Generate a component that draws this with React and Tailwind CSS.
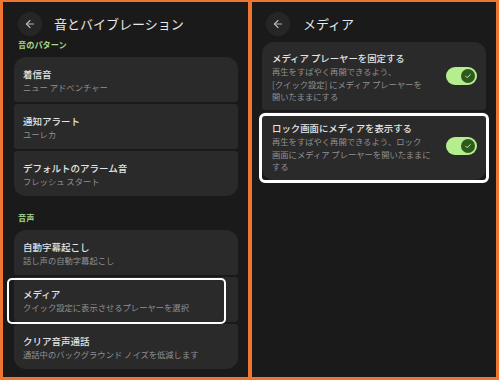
import React from "react";

const font = { fontFamily: '"Noto Sans CJK JP", "Noto Sans", sans-serif' };

function BackButton() {
  return (
    <div className="w-[24px] h-[24px] rounded-full bg-[#262626] flex items-center justify-center shrink-0">
      <svg width="12" height="12" viewBox="0 0 24 24" fill="none" stroke="#b4b4b4" strokeWidth="2.4" strokeLinecap="round" strokeLinejoin="round">
        <path d="M19 12H5" />
        <path d="M12 19l-7-7 7-7" />
      </svg>
    </div>
  );
}

function Item({ title, sub, pos, highlight }) {
  const radius =
    pos === "top"
      ? "rounded-t-[12px] rounded-b-[3px]"
      : pos === "bottom"
      ? "rounded-b-[12px] rounded-t-[3px]"
      : "rounded-[3px]";
  return (
    <div className={`relative h-[45px] bg-[#2a2a2a] ${radius} pl-[9px] pt-[11px]`}>
      <div className="text-[9.5px] leading-[13px] font-medium text-[#e4e4e4] whitespace-nowrap">{title}</div>
      <div className="text-[8.3px] leading-[12px] text-[#909090] whitespace-nowrap">{sub}</div>
      {highlight && (
        <div className="absolute z-10 left-[-7px] right-[12px] top-[1px] bottom-[-2px] border-[2.5px] border-white rounded-[5px]" />
      )}
    </div>
  );
}

function Toggle() {
  return (
    <div className="w-[31px] h-[18px] rounded-full bg-[#b5ee8e] flex items-center justify-end pr-[2px] shrink-0">
      <div className="w-[14px] h-[14px] rounded-full bg-[#2d5a1c] flex items-center justify-center">
        <svg width="8" height="8" viewBox="0 0 24 24" fill="none" stroke="#c8f2ad" strokeWidth="3" strokeLinecap="round" strokeLinejoin="round">
          <path d="M5 12.5l4.5 4.5L19 7.5" />
        </svg>
      </div>
    </div>
  );
}

function MediaCard({ title, lines, radius, highlight }) {
  return (
    <div className={`relative h-[68px] bg-[#2a2a2a] ${radius} flex items-center pl-[10px] pr-[9px]`}>
      <div className="flex-1 self-start pt-[10px]">
        <div className="text-[9.4px] leading-[13px] font-medium text-[#e4e4e4] whitespace-nowrap">{title}</div>
        {lines.map((l, i) => (
          <div key={i} className="text-[8.3px] leading-[12.5px] text-[#909090] whitespace-nowrap">{l}</div>
        ))}
      </div>
      <Toggle />
      {highlight && (
        <div className="absolute z-10 left-[-3px] right-[-3px] top-[1px] bottom-[-3px] border-[3px] border-white rounded-[6px]" />
      )}
    </div>
  );
}

export default function App() {
  return (
    <div style={font} className="w-[499px] h-[380px] bg-[#ef7631] flex gap-[4px] pt-[2px] pb-[3px] pl-[3px] pr-[3px] overflow-hidden">
      {/* Left panel */}
      <div className="w-[245px] h-full bg-[#1a1a1a] flex flex-col">
        <div className="pt-[10px] pl-[15px] flex items-center gap-[12px] h-[34px]">
          <BackButton />
          <div className="text-[13px] leading-[24px] text-[#e8e8e8] whitespace-nowrap">音とバイブレーション</div>
        </div>
        <div className="mt-[3px] pl-[15px] h-[10px] text-[8.2px] leading-[10px] font-bold text-[#a6d88c]">音のパターン</div>
        <div className="mt-[8px] ml-[11px] mr-[10px] flex flex-col gap-[2px]">
          <Item pos="top" title="着信音" sub="ニュー アドベンチャー" />
          <Item pos="mid" title="通知アラート" sub="ユーレカ" />
          <Item pos="bottom" title="デフォルトのアラーム音" sub="フレッシュ スタート" />
        </div>
        <div className="mt-[16px] pl-[15px] h-[10px] text-[8.2px] leading-[10px] font-bold text-[#a6d88c]">音声</div>
        <div className="mt-[8px] ml-[11px] mr-[10px] flex flex-col gap-[2px]">
          <Item pos="top" title="自動字幕起こし" sub="話し声の自動字幕起こし" />
          <Item pos="mid" title="メディア" sub="クイック設定に表示させるプレーヤーを選択" highlight />
          <Item pos="bottom" title="クリア音声通話" sub="通話中のバックグラウンド ノイズを低減します" />
        </div>
      </div>

      {/* Right panel */}
      <div className="flex-1 h-full bg-[#1a1a1a] flex flex-col">
        <div className="pt-[10px] pl-[14px] flex items-center gap-[13px] h-[34px]">
          <BackButton />
          <div className="text-[13px] leading-[24px] text-[#e8e8e8] whitespace-nowrap">メディア</div>
        </div>
        <div className="mt-[6px] ml-[10px] mr-[10px] flex flex-col gap-[2px]">
          <MediaCard
            radius="rounded-t-[12px] rounded-b-[3px]"
            title="メディア プレーヤーを固定する"
            lines={["再生をすばやく再開できるよう、", "[クイック設定] にメディア プレーヤーを", "開いたままにする"]}
          />
          <MediaCard
            radius="rounded-b-[12px] rounded-t-[3px]"
            title="ロック画面にメディアを表示する"
            lines={["再生をすばやく再開できるよう、ロック", "画面にメディア プレーヤーを開いたままに", "する"]}
            highlight
          />
        </div>
      </div>
    </div>
  );
}
